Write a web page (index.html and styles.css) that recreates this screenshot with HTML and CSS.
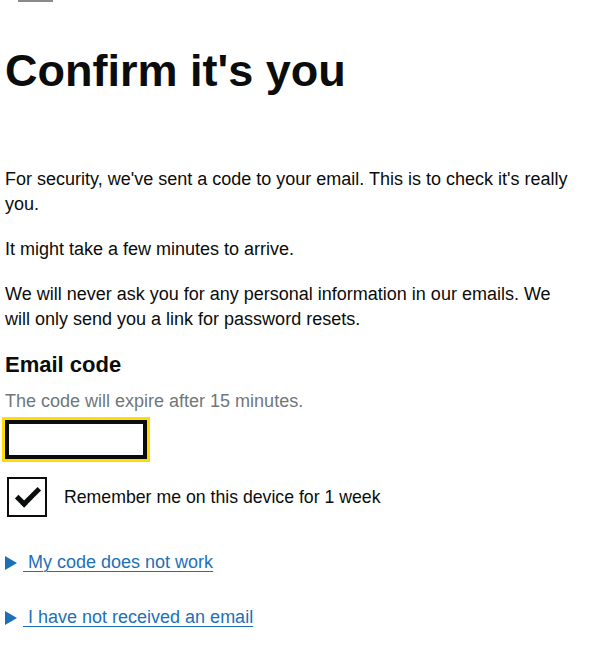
FILE: index.html
```html
<!DOCTYPE html>
<html lang="en">
<head>
<meta charset="utf-8">
<title>Confirm it's you</title>
<link rel="stylesheet" href="styles.css">
</head>
<body>
<div class="page">
  <div class="rule"></div>
  <h1 class="title">Confirm it's you</h1>
  <p class="body">For security, we've sent a code to your email. This is to check it's really you.</p>
  <p class="body">It might take a few minutes to arrive.</p>
  <p class="body">We will never ask you for any personal information in our emails. We will only send you a link for password resets.</p>
  <div class="field">
    <label class="label" for="code">Email code</label>
    <div class="hint">The code will expire after 15 minutes.</div>
    <input class="input" id="code" type="text">
  </div>
  <div class="check">
    <span class="box"><span class="tick"></span></span>
    <span class="check-label">Remember me on this device for 1 week</span>
  </div>
  <div class="details">
    <span class="arrow"></span>
    <span class="summary">&nbsp;My code does not work</span>
  </div>
  <div class="details">
    <span class="arrow"></span>
    <span class="summary">&nbsp;I have not received an email</span>
  </div>
</div>
</body>
</html>
```

FILE: styles.css
```css
html, body {
  margin: 0;
  padding: 0;
  background: #ffffff;
}
.page {
  padding: 0 10px 0 5px;
  width: 574px;
  font-family: "Liberation Sans", Arial, sans-serif;
  color: #0b0c0c;
}
.rule {
  margin-left: 13px;
  width: 35px;
  height: 2px;
  background: #8a8a8a;
}
.title {
  margin: 42px 0 0 0;
  font-size: 45px;
  line-height: 54px;
  font-weight: 700;
  letter-spacing: 0;
}
.body {
  margin: 0 0 20px 0;
  font-size: 18px;
  line-height: 25px;
}
.title + .body {
  margin-top: 69px;
}
.field {
  display: flex;
  flex-direction: column;
  align-items: flex-start;
}
.label {
  font-size: 22px;
  font-weight: 700;
  line-height: 30px;
  margin-top: -2px;
}
.hint {
  margin-top: 10px;
  font-size: 18px;
  line-height: 22px;
  color: #6f777b;
}
.input {
  margin: 8px 0 0 0;
  box-sizing: border-box;
  width: 142px;
  height: 39px;
  border: 2px solid #0b0c0c;
  box-shadow: inset 0 0 0 2px #0b0c0c;
  outline: 3px solid #ffdd00;
  background: #fff;
  padding: 5px;
  font: inherit;
}
.check {
  margin-top: 18px;
  display: flex;
  align-items: center;
  gap: 17px;
  padding-left: 2px;
}
.box {
  position: relative;
  width: 40px;
  height: 40px;
  box-sizing: border-box;
  border: 2px solid #0b0c0c;
  flex: none;
}
.tick {
  position: absolute;
  top: 9px;
  left: 7px;
  width: 19px;
  height: 8px;
  border: solid #0b0c0c;
  border-width: 0 0 5px 5px;
  transform: rotate(-45deg);
}
.check-label {
  font-size: 17.7px;
  line-height: 25px;
  color: #0b0c0c;
}
.details {
  display: flex;
  align-items: center;
  margin-top: 33px;
  color: #1d70b8;
  font-size: 18px;
  line-height: 25px;
}
.details + .details {
  margin-top: 30px;
}
.arrow {
  width: 0;
  height: 0;
  border-style: solid;
  border-width: 7px 0 7px 12px;
  border-color: transparent transparent transparent #1d70b8;
  margin-right: 6px;
  flex: none;
}
.summary {
  text-decoration: underline;
  text-decoration-thickness: 1px;
  text-underline-offset: 3px;
}
```
